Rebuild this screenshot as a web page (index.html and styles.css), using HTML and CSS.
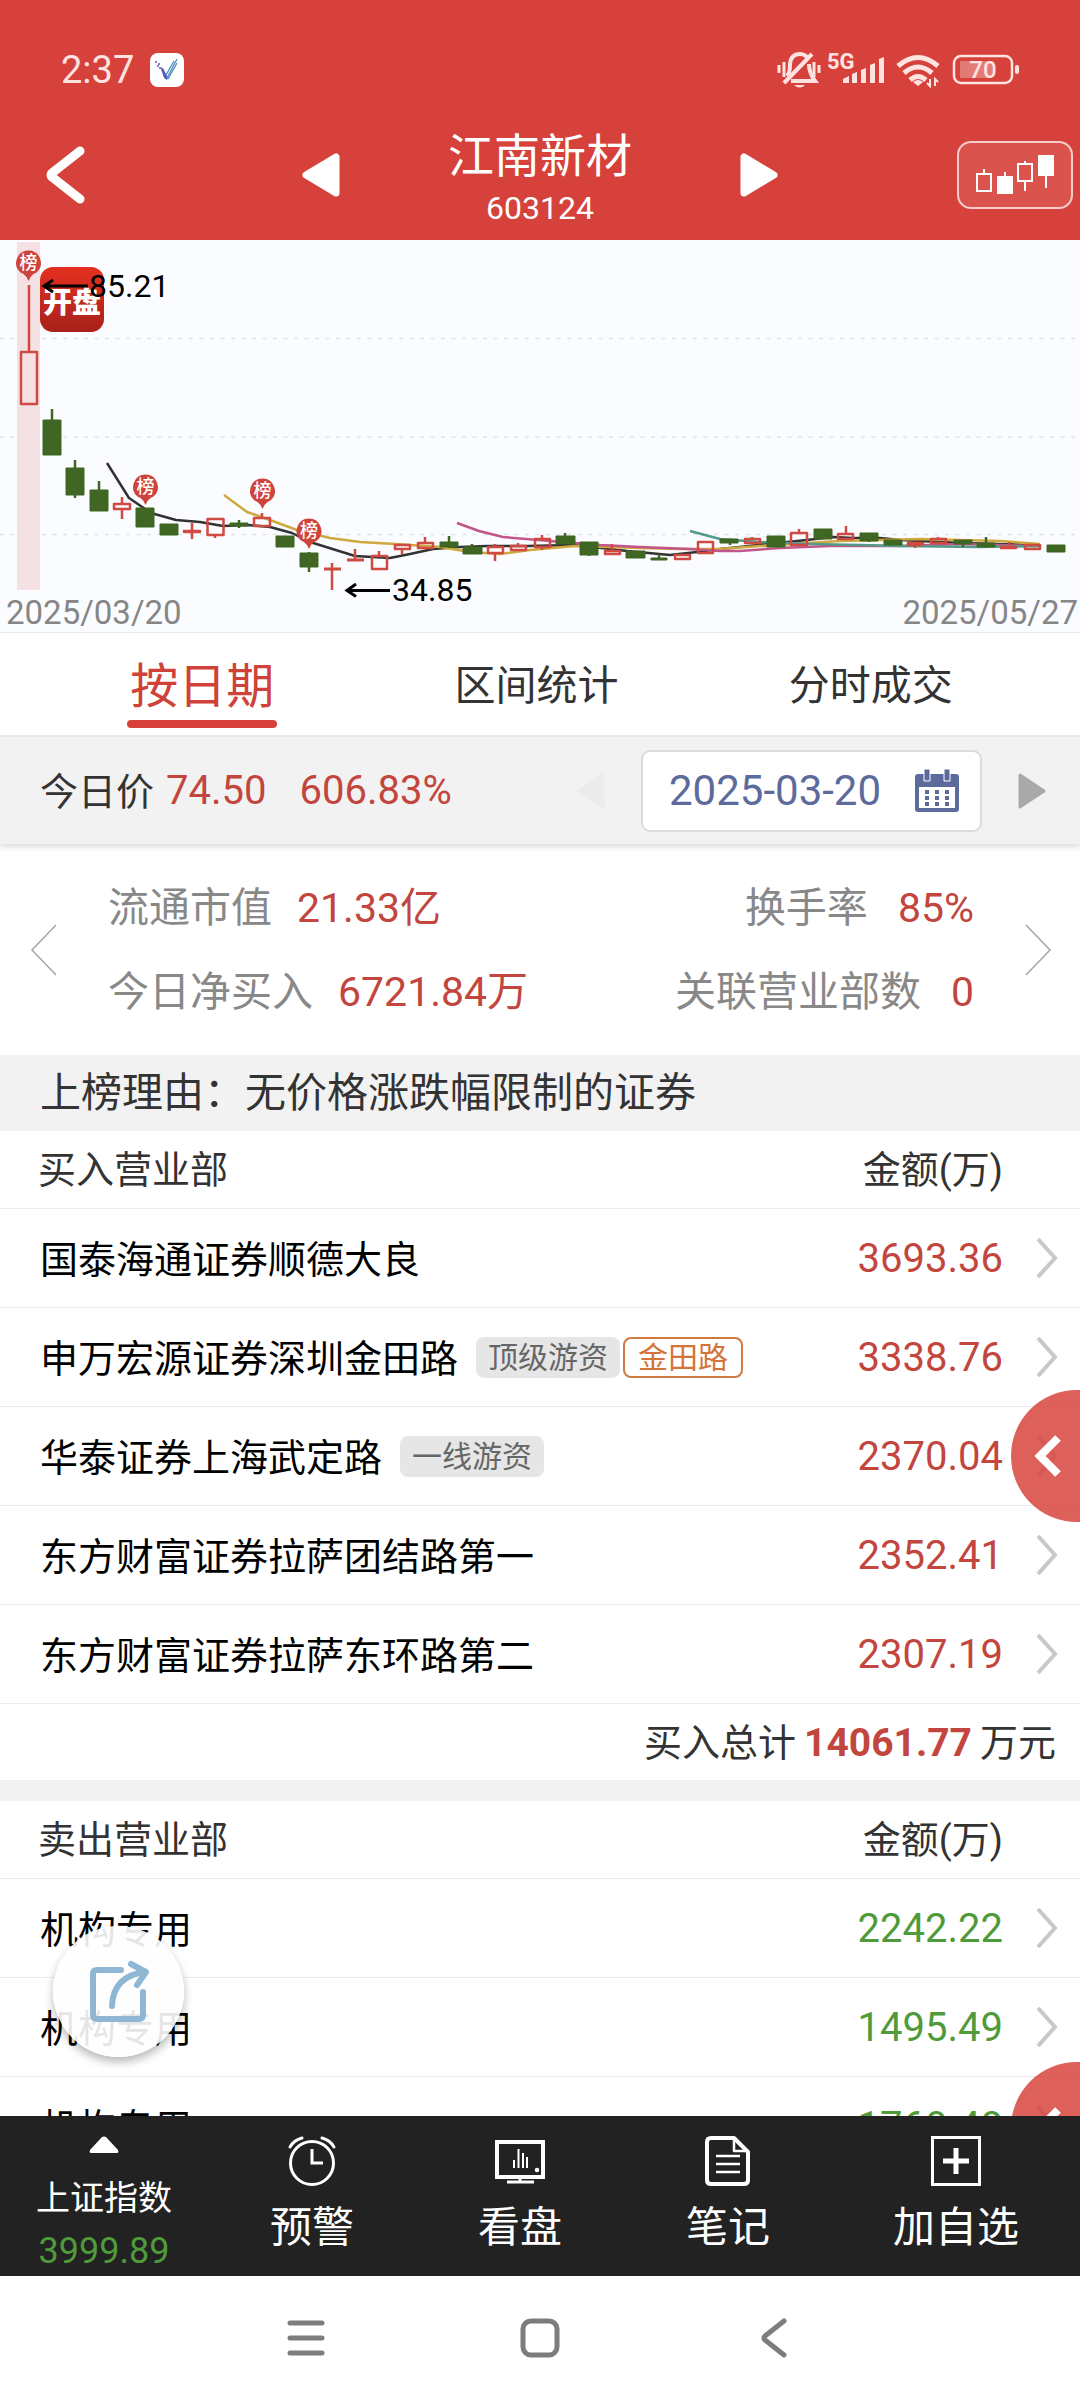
FILE: index.html
```html
<!DOCTYPE html>
<html lang="zh-CN">
<head>
<meta charset="utf-8">
<meta name="viewport" content="width=device-width, initial-scale=1">
<title>江南新材 603124</title>
<link rel="stylesheet" href="styles.css">
</head>
<body>
<div class="app">
  <header class="top">
    <div class="status">
      <span class="status-time">2:37</span>
      <svg class="status-app" width="34" height="34" viewBox="0 0 34 34" aria-hidden="true">
        <rect width="34" height="34" rx="8" fill="#fff"/>
        <path d="M11 16l3 9 3 2 1-2-5-10z" fill="#5b57b8"/>
        <path d="M5 9h2M8 11h2M7 13h2M9 15h3" stroke="#6a4fb0" stroke-width="1.5"/>
        <path d="M17 25L27 6M16 22L24 8M18 26l9-16" stroke="#4f8fc4" stroke-width="1.3"/>
      </svg>
      <svg class="status-icons" width="243" height="40" viewBox="777 50 243 40" aria-hidden="true">
        <g fill="none" stroke="#ffe3e0" stroke-width="4">
          <path d="M787 76Q790 73 790 64Q791 54 800 54Q804 54 807 57"/>
          <path d="M809 64Q809 73 815 81H791"/>
          <path d="M784 83L812 54"/>
          <path d="M784 62v15M779 65v8M814 62v15M819 65v8" stroke-width="3"/>
        </g>
        <path d="M794 85h11q-5 5-11 0z" fill="#ffe3e0"/>
        <text x="827" y="69" class="svg-5g">5G</text>
        <path d="M843 79l6-3v7h-6zM852 74l5-2v11h-5zM861 70l5-2v15h-5zM870 65l5-2v20h-5zM879 59l5-2v26h-5z" fill="#ffe3e0"/>
        <g fill="none" stroke="#ffe3e0" stroke-width="5">
          <path d="M898 66q20-17 40 0"/><path d="M904 73q14-12 28 0"/><path d="M910 80q8-7 16 0"/>
        </g>
        <path d="M918 86l-5-4q5-4 10 0z" fill="#ffe3e0"/>
        <path d="M930 79v7l-3-3M935 86v-7l3 3" stroke="#ffe3e0" stroke-width="2" fill="none"/>
        <rect x="954" y="56" width="58" height="27" rx="7" fill="none" stroke="#ffe3e0" stroke-width="2.5"/>
        <path d="M960 61h32v17h-32z" fill="#e37a74"/>
        <rect x="1015" y="65" width="4" height="9" rx="2" fill="#ffe3e0"/>
        <text x="983" y="78" class="svg-bat">70</text>
      </svg>
    </div>
    <div class="titlebar">
      <button class="icon-btn back" aria-label="返回">
        <svg width="40" height="58" viewBox="0 0 40 58"><path d="M34 5L6 27Q4 29 6 31L34 53" fill="none" stroke="#fff" stroke-width="9" stroke-linecap="round" stroke-linejoin="round"/></svg>
      </button>
      <div class="stock-switch">
        <button class="icon-btn" aria-label="上一只">
          <svg width="38" height="44" viewBox="0 0 38 44"><path d="M34 4v36L4 22z" fill="#fff" stroke="#fff" stroke-width="7" stroke-linejoin="round"/></svg>
        </button>
        <div class="stock">
          <h1 class="stock-name">江南新材</h1>
          <div class="stock-code">603124</div>
        </div>
        <button class="icon-btn" aria-label="下一只">
          <svg width="38" height="44" viewBox="0 0 38 44"><path d="M4 4v36L34 22z" fill="#fff" stroke="#fff" stroke-width="7" stroke-linejoin="round"/></svg>
        </button>
      </div>
      <button class="kline-btn" aria-label="K线">
        <svg width="80" height="40" viewBox="0 0 80 40" fill="none" stroke="#fff" stroke-width="2">
          <path d="M2 19h14v17H2zM9 14v5M43 9h14v17H43zM50 6v3M50 26v10"/>
          <path d="M23 22h14v16H23zM64 1h14v19H64z" fill="#fff"/>
          <path d="M30 17v5M71 20v13"/>
        </svg>
      </button>
    </div>
  </header>

  <svg class="chart" viewBox="0 240 1080 392" role="img" aria-label="日K线图">
    <defs>
      <linearGradient id="appred" x1="0" y1="0" x2="0" y2="1"><stop offset="0" stop-color="#e5301f"/><stop offset="1" stop-color="#a8211b"/></linearGradient>
      <path id="pin" d="M0-12.5A12.5 12.5 0 0 1 8 9.500L5 11Q2 13 0 18Q-2 13-5 11L-8 9.500A12.5 12.5 0 0 1 0-12.5z" fill="#ce433b"/>
    </defs>
    <path d="M17 242h23v348H17z" fill="#f5e0e3"/>
    <path d="M0 338.500H1080M0 437H1080M0 534.500H1080" stroke="#e1e3e8" stroke-width="1.500" stroke-dasharray="4 6.500"/>
    <rect x="40" y="267" width="64" height="65" rx="13" fill="url(#appred)"/>
    <text x="72" y="313" class="app-badge">开盘</text>

    <g fill="none" stroke-width="2.500" stroke-linejoin="round">
      <polyline stroke="#333" points="107,463 129,498 151,513 176,520 200,522 223,526 248,525 270,527 292,533 310,542 355,556 390,558 410,554 433,549 460,547 487,546 527,546 573,545 593,547 627,551 670,555 697,552 720,549 740,547 767,544 807,540 833,537 853,538 880,538 900,540 960,543 1040,545"/>
      <polyline stroke="#cfa93d" points="224,495 247,512 270,520 297,530 330,538 360,542 395,544 440,547 470,552 500,554 530,550 575,546 640,548 680,549 720,549 760,546 840,541 880,540 920,539 960,540 1000,541 1040,544"/>
      <polyline stroke="#c2568a" points="457,523 479,531 503,537 550,541 600,545 640,547 690,549 720,551 740,551 780,548 830,546 900,546 960,544 1040,546"/>
      <polyline stroke="#539a88" points="690,531 720,539 760,542 810,544 860,545 900,546 980,547 1040,546"/>
    </g>

    <g fill="none" stroke="#cf4a42" stroke-width="2.500" stroke-linejoin="round">
      <path d="M21 352h16v52H21zM114 504h16v5H114zM207.500 519h16v16h-16zM254 518h16v8h-16zM372 556h15v13H372zM395 545h15v4H395zM418 543h15v5H418zM488 547h15v6H488zM511 546h15v4H511zM535 539h15v8H535zM605 551h15v3H605zM675 555h15v4H675zM698 542h15v11H698zM745 539h15v4H745zM791 533h16v12H791zM838 534h15v5H838zM908 543h15v2H908zM931 539h15v4H931zM1001 547h15v1H1001zM1025 545h15v4H1025zM184 531h16v1H184z"/>
      <path d="M324 569h17M347 560h17" stroke-width="3"/>
      <path d="M29 285v67M122 497v6M122 510v9M192 523v16M215 536v2M262 513v4M332 563v27M355 549v11M379 551v4M402 550v4M425 537v5M495 544v2M495 554v7M518 543v2M542 535v3M542 548v2M612 544v6M752 537v1M799 529v3M846 526v7M915 546v2M938 537v1M1009 542v4"/>
    </g>
    <g fill="#3f6723">
      <path d="M43 420h18v35H43zM66 468h18v27H66zM90 490h18v21H90zM136 508h18v19H136zM160 524h18v11H160zM230 523h18v3H230zM276 536h18v11H276zM300 553h18v14H300zM440 542h18v5H440zM463 547h19v7H463zM556 536h19v8H556zM580 542h18v13H580zM626 551h19v7H626zM651 558h16v2H651zM720 539h18v4H720zM767 536h18v11H767zM814 529h18v10H814zM860 533h18v8H860zM884 540h18v5H884zM954 540h18v4H954zM977 543h18v4H977zM1047 545h18v7H1047z" stroke="#3f6723" stroke-width="1" stroke-linejoin="round"/>
      <path d="M52 409v12M75 460v38M99 481v10M239 520v8M309 552v20M449 536v12M472 544v4M565 533v4M589 542v14M659 554v4M730 543v2M869 535v7M963 543v4M986 537v6" stroke="#3f6723" stroke-width="2.500"/>
    </g>
    <g class="pins">
      <g transform="translate(28.500 263)"><use href="#pin"/><text y="6">榜</text></g>
      <g transform="translate(145.500 487)"><use href="#pin"/><text y="6">榜</text></g>
      <g transform="translate(262.500 491)"><use href="#pin"/><text y="6">榜</text></g>
      <g transform="translate(309 531)"><use href="#pin"/><text y="6">榜</text></g>
    </g>
    <g fill="none" stroke="#000" stroke-width="3">
      <path d="M44 286H88M53 280l-9 6 9 6M347 590.500H390M356 584l-9 6.500 9 6"/>
    </g>
    <text x="89" y="297" class="chart-label">85.21</text>
    <text x="392" y="601" class="chart-label">34.85</text>
    <text x="6" y="624" class="chart-date">2025/03/20</text>
    <text x="1078" y="624" class="chart-date end">2025/05/27</text>
  </svg>

  <nav class="tabs">
    <button class="tab active">按日期</button>
    <button class="tab">区间统计</button>
    <button class="tab">分时成交</button>
  </nav>

  <section class="pricebar">
    <span class="price-label">今日价</span>
    <span class="price">74.50</span>
    <span class="change">606.83%</span>
    <div class="datepick">
      <button class="icon-btn" aria-label="前一日" disabled>
        <svg width="28" height="36" viewBox="0 0 28 36"><path d="M26 2v32L2 18z" fill="#ebebeb" stroke="#ebebeb" stroke-width="3" stroke-linejoin="round"/></svg>
      </button>
      <button class="datebox">
        <span>2025-03-20</span>
        <svg width="46" height="44" viewBox="0 0 46 44">
          <path d="M4 5h38q3 0 3 3v32q0 3-3 3H4q-3 0-3-3V8q0-3 3-3zM5 18v21h36V18z" fill="#5c6a9c" fill-rule="evenodd"/>
          <path d="M10 0h6v12h-6zM30 0h6v12h-6z" fill="#5c6a9c" stroke="#fff" stroke-width="1"/>
          <path d="M11 23h24M11 29h24M11 35h24" stroke="#5c6a9c" stroke-width="4" stroke-dasharray="4 6"/>
        </svg>
      </button>
      <button class="icon-btn" aria-label="后一日">
        <svg width="28" height="36" viewBox="0 0 28 36"><path d="M2 2v32L26 18z" fill="#a9a9a9" stroke="#a9a9a9" stroke-width="3" stroke-linejoin="round"/></svg>
      </button>
    </div>
  </section>

  <main class="content">
    <section class="stats">
      <button class="icon-btn" aria-label="上一组">
        <svg width="28" height="52" viewBox="0 0 28 52"><path d="M26 1L2 26L26 51" fill="none" stroke="#a6a6a6" stroke-width="1.5"/></svg>
      </button>
      <dl class="stat-grid">
        <div class="stat"><dt>流通市值</dt><dd>21.33亿</dd></div>
        <div class="stat"><dt>换手率</dt><dd>85%</dd></div>
        <div class="stat"><dt>今日净买入</dt><dd>6721.84万</dd></div>
        <div class="stat"><dt>关联营业部数</dt><dd>0</dd></div>
      </dl>
      <button class="icon-btn" aria-label="下一组">
        <svg width="28" height="52" viewBox="0 0 28 52"><path d="M2 1L26 26L2 51" fill="none" stroke="#a6a6a6" stroke-width="1.5"/></svg>
      </button>
    </section>

    <h2 class="reason">上榜理由：无价格涨跌幅限制的证券</h2>

    <table class="seats buy">
      <thead><tr><th>买入营业部</th><th class="amount">金额(万)</th><th class="more"></th></tr></thead>
      <tbody>
        <tr><td><a href="#">国泰海通证券顺德大良</a></td><td class="amount">3693.36</td><td class="more"><svg class="chev" viewBox="0 0 22 40"><path d="M2 1L19 20L2 39"/></svg></td></tr>
        <tr><td><div class="seat"><a href="#">申万宏源证券深圳金田路</a><span class="tag">顶级游资</span><span class="tag outline">金田路</span></div></td><td class="amount">3338.76</td><td class="more"><svg class="chev" viewBox="0 0 22 40"><path d="M2 1L19 20L2 39"/></svg></td></tr>
        <tr><td><div class="seat"><a href="#">华泰证券上海武定路</a><span class="tag">一线游资</span></div></td><td class="amount">2370.04</td><td class="more"><svg class="chev" viewBox="0 0 22 40"><path d="M2 1L19 20L2 39"/></svg></td></tr>
        <tr><td><a href="#">东方财富证券拉萨团结路第一</a></td><td class="amount">2352.41</td><td class="more"><svg class="chev" viewBox="0 0 22 40"><path d="M2 1L19 20L2 39"/></svg></td></tr>
        <tr><td><a href="#">东方财富证券拉萨东环路第二</a></td><td class="amount">2307.19</td><td class="more"><svg class="chev" viewBox="0 0 22 40"><path d="M2 1L19 20L2 39"/></svg></td></tr>
      </tbody>
      <tfoot><tr><td colspan="3"><div class="total">买入总计<b>14061.77</b>万元</div></td></tr></tfoot>
    </table>

    <table class="seats sell">
      <thead><tr><th>卖出营业部</th><th class="amount">金额(万)</th><th class="more"></th></tr></thead>
      <tbody>
        <tr><td><a href="#">机构专用</a></td><td class="amount">2242.22</td><td class="more"><svg class="chev" viewBox="0 0 22 40"><path d="M2 1L19 20L2 39"/></svg></td></tr>
        <tr><td><a href="#">机构专用</a></td><td class="amount">1495.49</td><td class="more"><svg class="chev" viewBox="0 0 22 40"><path d="M2 1L19 20L2 39"/></svg></td></tr>
        <tr><td><a href="#">机构专用</a></td><td class="amount">1760.48</td><td class="more"><svg class="chev" viewBox="0 0 22 40"><path d="M2 1L19 20L2 39"/></svg></td></tr>
      </tbody>
    </table>

    <button class="drawer upper" aria-label="展开侧栏">
      <svg width="28" height="42" viewBox="0 0 28 42"><path d="M23 3L5 21L23 39" fill="none" stroke="#fff" stroke-width="8"/></svg>
    </button>
    <button class="drawer lower" aria-label="展开侧栏">
      <svg width="28" height="42" viewBox="0 0 28 42"><path d="M23 3L5 21L23 39" fill="none" stroke="#fff" stroke-width="8"/></svg>
    </button>
    <button class="share" aria-label="分享">
      <svg width="60" height="64" viewBox="0 0 60 64" fill="none" stroke="#8fb7d3" stroke-width="6" stroke-linecap="round" stroke-linejoin="round">
        <path d="M32 10H8Q4 10 4 14V55Q4 59 8 59H50Q54 59 54 55V32"/>
        <path d="M23 46Q24 16 56 12M42 4L57 12L48 25"/>
      </svg>
    </button>
  </main>

  <nav class="toolbar">
    <button class="tool index">
      <svg width="30" height="17" viewBox="0 0 30 17"><path d="M13 1q2-1 4 0l12 13q1 3-1 3H2q-2 0-1-3z" fill="#fff"/></svg>
      <span class="index-name">上证指数</span>
      <span class="index-value">3999.89</span>
    </button>
    <button class="tool">
      <svg width="50" height="50" viewBox="0 0 50 50" fill="none" stroke="#fff" stroke-width="3" stroke-linecap="round"><circle cx="25" cy="27" r="21.500"/><path d="M25 13v14h11" stroke-linecap="butt"/><path d="M3 11Q7 4 15 2M47 11Q43 4 35 2"/></svg>
      <span>预警</span>
    </button>
    <button class="tool">
      <svg width="50" height="50" viewBox="0 0 50 50" fill="none" stroke="#fff" stroke-width="4"><path d="M2 6h46v35H2z"/><path d="M25 41v4M12 46h27" stroke-width="3"/><path d="M19 32v-8M23.500 32V13M28 32V17M32 32V21" stroke-width="2"/><circle cx="42" cy="34" r="1"  stroke-width="2.500"/></svg>
      <span>看盘</span>
    </button>
    <button class="tool">
      <svg width="50" height="50" viewBox="0 0 50 50" fill="none" stroke="#fff" stroke-width="4" stroke-linejoin="round"><path d="M8 2h23l14 14v28q0 4-4 4H8q-4 0-4-4V6q0-4 4-4z"/><path d="M31 2v13h14M13 20h24M13 28h24M13 36h24" stroke-width="2.500"/></svg>
      <span>笔记</span>
    </button>
    <button class="tool">
      <svg width="50" height="50" viewBox="0 0 50 50" fill="none" stroke="#fff"><path d="M1.500 1.500h47v47h-47z" stroke-width="3"/><path d="M25 12v26M12 25h26" stroke-width="5"/></svg>
      <span>加自选</span>
    </button>
  </nav>

  <nav class="sysnav">
    <button class="icon-btn" aria-label="多任务"><svg width="40" height="40" viewBox="0 0 40 40"><path d="M4 5h32M4 20h32M4 35h32"/></svg></button>
    <button class="icon-btn" aria-label="主页"><svg width="40" height="40" viewBox="0 0 40 40"><rect x="3" y="3" width="34" height="34" rx="8"/></svg></button>
    <button class="icon-btn" aria-label="返回"><svg width="40" height="40" viewBox="0 0 40 40"><path d="M30 3L11 18Q9 20 11 22L30 37"/></svg></button>
  </nav>
</div>
</body>
</html>
```

FILE: styles.css
```css
* { box-sizing: border-box; }

body {
  margin: 0;
  background: #fff;
  color: #333;
  font-family: Roboto, "Noto Sans CJK SC", sans-serif;
  font-size: 38px;
}

button {
  padding: 0;
  border: 0;
  background: none;
  color: inherit;
  font: inherit;
}

svg { display: block; }

h1, h2, dl, dd { margin: 0; font-weight: 400; }

.app {
  display: flex;
  flex-direction: column;
  height: 100vh;
  min-height: 1600px;
}

.app > * { flex: none; }

.icon-btn { display: block; }

/* header */
.top {
  height: 240px;
  background: #d6423b;
  color: #fff;
}

.status {
  display: flex;
  align-items: center;
  height: 112px;
  padding: 28px 60px 0 61px;
}

.status-time { color: #ffe3e0; line-height: 40px; }
.status-app { margin-left: 16px; }
.status-icons { margin-left: auto; }

.svg-5g { font-size: 22px; font-weight: 700; fill: #ffe3e0; }
.svg-bat { font-size: 24px; font-weight: 500; fill: #ffe3e0; text-anchor: middle; }

.titlebar {
  display: grid;
  grid-template-columns: 130px 1fr 130px;
  align-items: center;
  height: 126px;
}

.back { padding-left: 46px; }

.stock-switch {
  display: flex;
  justify-content: center;
  align-items: center;
  gap: 108px;
}

.stock { padding-top: 6px; text-align: center; }
.stock-name { font-size: 46px; line-height: 60px; }
.stock-code { font-size: 32px; line-height: 44px; }

.kline-btn {
  display: flex;
  justify-content: center;
  align-items: center;
  justify-self: end;
  width: 116px;
  height: 68px;
  margin-right: 7px;
  border: 2px solid #f6cdca;
  border-radius: 14px;
  background: #da534d;
}

/* chart */
.chart {
  width: 100%;
  border-bottom: 1px solid #e6e8ea;
  background: #fbfcff;
}

.app-badge { font-size: 29px; font-weight: 900; fill: #fff; text-anchor: middle; }
.pins text { font-size: 18px; font-weight: 500; fill: #fff; text-anchor: middle; }
.chart-label { font-size: 32px; fill: #000; }
.chart-date { font-size: 33px; fill: #868686; }
.chart-date.end { text-anchor: end; }

/* tabs */
.tabs {
  display: grid;
  grid-template-columns: repeat(3, 1fr);
  height: 104px;
  padding: 0 42px 0 35px;
  border-bottom: 2px solid #ebebeb;
}

.tab {
  justify-self: center;
  padding-bottom: 5px;
  font-size: 41px;
}

.tab.active {
  position: relative;
  color: #cf4139;
  font-size: 48px;
}

.tab.active::after {
  content: "";
  position: absolute;
  right: -3px;
  bottom: 7px;
  left: -3px;
  height: 8px;
  border-radius: 4px;
  background: #d6423b;
}

/* price bar */
.pricebar {
  display: flex;
  align-items: center;
  height: 107px;
  padding: 0 34px 0 40px;
  background: #f2f2f2;
  box-shadow: 0 3px 6px rgba(0, 0, 0, .14);
  z-index: 1;
}

.price-label { padding-bottom: 4px; }
.price, .change { color: #c2453e; font-size: 40px; }
.price { margin-left: 12px; }
.change { margin-left: 33px; }

.datepick {
  display: flex;
  align-items: center;
  gap: 36px;
  margin-left: auto;
}

.datebox {
  display: flex;
  justify-content: space-between;
  align-items: center;
  width: 341px;
  height: 82px;
  padding: 0 20px 0 26px;
  border: 2px solid #dcdcdc;
  border-radius: 9px;
  background: #fff;
  color: #5c6a9c;
  font-size: 42px;
}

/* scrolled content */
.app > .content {
  position: relative;
  flex: 1 1 0;
  min-height: 0;
  overflow: hidden;
}

.stats {
  display: flex;
  align-items: center;
  justify-content: space-between;
  height: 211px;
  padding: 0 28px 0 30px;
}

.stat-grid {
  display: grid;
  flex: 1;
  grid-template-columns: auto auto;
  justify-content: space-between;
  padding: 0 50px;
  font-size: 41px;
  line-height: 84px;
}

.stat { display: flex; gap: 25px; }
.stat:nth-child(even) { justify-content: flex-end; gap: 30px; }
.stat dt { color: #888; }
.stat dd { color: #c2453e; }

.reason {
  padding: 0 40px;
  background: #f2f2f2;
  font-size: 41px;
  line-height: 76px;
}

/* seat tables */
.seats {
  width: 100%;
  border-spacing: 0;
}

.seats.sell { border-top: 21px solid #f2f2f2; }

.seats th, .seats td {
  padding: 0;
  border-bottom: 1px solid #ececec;
  font-weight: 400;
  text-align: left;
}

.seats th { height: 78px; padding-bottom: 6px; }
.seats td { height: 99px; }
.seats th:first-child { padding-left: 38px; }
.seats td:first-child { padding-bottom: 3px; padding-left: 40px; }
.seats .amount { text-align: right; }
.seats .more { width: 77px; padding-left: 33px; }
.seats td.amount { font-size: 40px; }
.buy td.amount { color: #c2453e; }
.sell td.amount { color: #4f9a3a; }
.seats tfoot td:first-child { height: 76px; padding-bottom: 6px; border-bottom: 0; }

.seats a { color: #000; text-decoration: none; }

.seat { display: flex; align-items: center; }

.tag {
  margin: 3px 0 0 18px;
  padding: 0 12px;
  border-radius: 8px;
  background: #e6e6e6;
  color: #666;
  font-size: 30px;
  line-height: 41px;
}

.tag.outline {
  margin-left: 3px;
  padding: 0 13px;
  border: 2px solid #cf7a43;
  background: #fff;
  color: #d4743a;
  line-height: 37px;
}

.chev {
  width: 22px;
  height: 40px;
  fill: none;
  stroke: #c8c8c8;
  stroke-width: 4px;
}

.total {
  padding-right: 24px;
  text-align: right;
}

.total b { margin: 0 8px; color: #c2453e; font-size: 39px; }

/* floating controls */
.drawer {
  position: absolute;
  right: -63px;
  display: flex;
  align-items: center;
  width: 132px;
  height: 132px;
  padding-left: 24px;
  border-radius: 50%;
  background: rgba(214, 66, 59, .84);
}

.drawer.upper { top: 546px; }
.drawer.lower { top: 1218px; }

.share {
  position: absolute;
  top: 1082px;
  left: 53px;
  display: flex;
  align-items: center;
  justify-content: center;
  width: 131px;
  height: 131px;
  border-radius: 50%;
  background: rgba(254, 254, 254, .9);
  box-shadow: 0 5px 10px rgba(0, 0, 0, .28);
}

/* bottom toolbar */
.toolbar {
  display: grid;
  grid-template-columns: 26fr 26fr 26fr 26fr 31fr;
  height: 160px;
  background: #222;
  color: #fff;
}

.tool {
  display: flex;
  flex-direction: column;
  align-items: center;
  padding-top: 20px;
  font-size: 42px;
  line-height: 84px;
}

.index-name { margin-top: 20px; font-size: 34px; line-height: 50px; }
.index-value { color: #4f9a3a; font-size: 36px; line-height: 56px; }

/* system navigation */
.sysnav {
  display: flex;
  justify-content: center;
  align-items: center;
  gap: 194px;
  height: 124px;
}

.sysnav svg {
  fill: none;
  stroke: #7d7d7d;
  stroke-width: 5px;
  stroke-linecap: round;
  stroke-linejoin: round;
}
```
